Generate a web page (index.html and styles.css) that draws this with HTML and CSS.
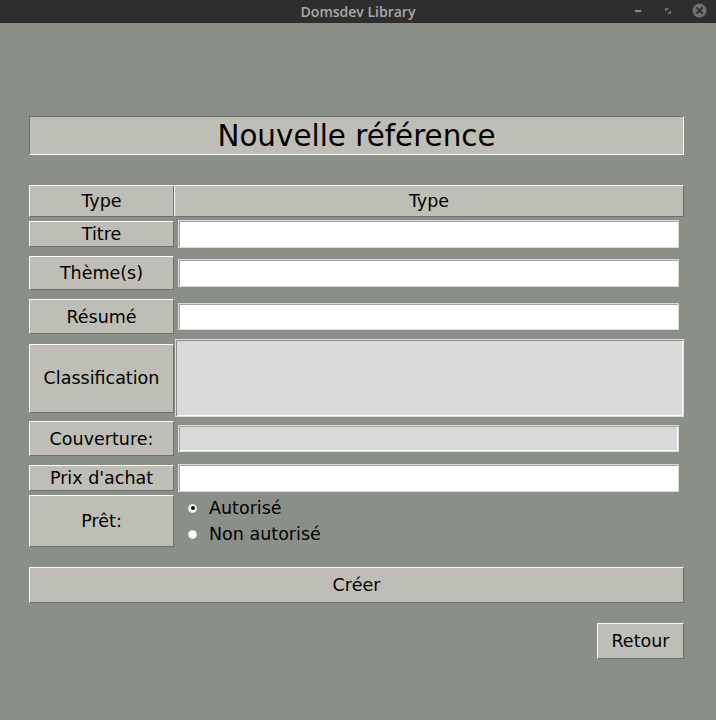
FILE: index.html
```html
<!DOCTYPE html>
<html lang="fr">
<head>
<meta charset="utf-8">
<title>Domsdev Library</title>
<link rel="stylesheet" href="styles.css">
</head>
<body>
<header class="titlebar">
  <span class="titlebar-text">Domsdev Library</span>
  <div class="wm-buttons">
    <svg class="wm-min" width="8" height="4" viewBox="0 0 8 4"><rect x="1" y="1" width="6" height="2" fill="#8c8c8c"/></svg>
    <svg class="wm-max" width="8" height="8" viewBox="0 0 8 8"><path d="M1 1h4L1 5z M7 7H3l4-4z" fill="#6f6f6f"/></svg>
    <svg class="wm-close" width="15" height="15" viewBox="0 0 15 15"><circle cx="7.5" cy="7.5" r="7" fill="#707070"/><path d="M5 5l5 5M10 5l-5 5" stroke="#2e2e2e" stroke-width="1.8" stroke-linecap="round"/></svg>
  </div>
</header>
<main class="window">
  <div class="heading">Nouvelle référence</div>
  <div class="form">
    <div class="row row-type">
      <div class="lbl h-32">Type</div>
      <div class="lbl lbl-wide h-32">Type</div>
    </div>
    <div class="row row-titre">
      <div class="lbl h-26">Titre</div>
      <div class="entry h-28"></div>
    </div>
    <div class="row row-theme">
      <div class="lbl h-34">Thème(s)</div>
      <div class="entry h-28"></div>
    </div>
    <div class="row row-resume">
      <div class="lbl h-35">Résumé</div>
      <div class="entry h-27"></div>
    </div>
    <div class="row row-classif">
      <div class="lbl h-69">Classification</div>
      <div class="textbox"></div>
    </div>
    <div class="row row-couv">
      <div class="lbl h-35">Couverture:</div>
      <div class="entry entry-disabled h-27"></div>
    </div>
    <div class="row row-prix">
      <div class="lbl h-26">Prix d'achat</div>
      <div class="entry h-28"></div>
    </div>
    <div class="row row-pret">
      <div class="lbl h-52">Prêt:</div>
      <div class="radios">
        <div class="radio"><span class="dot dot-on"></span><span>Autorisé</span></div>
        <div class="radio"><span class="dot"></span><span>Non autorisé</span></div>
      </div>
    </div>
  </div>
  <div class="btn btn-wide">Créer</div>
  <div class="actions"><div class="btn btn-back">Retour</div></div>
</main>
</body>
</html>
```
FILE: styles.css
```css
html, body {
  margin: 0;
  padding: 0;
}
body {
  width: 716px;
  height: 720px;
  background: #8a8f87;
  font-family: "DejaVu Sans", sans-serif;
  font-size: 17.5px;
  color: #000;
  overflow: hidden;
}
.titlebar {
  height: 23px;
  background: #2e2e2e;
  display: flex;
  align-items: center;
  justify-content: center;
  position: relative;
}
.titlebar-text {
  font-family: "Open Sans", sans-serif;
  font-weight: 600;
  font-size: 14px;
  color: #aaaaaa;
  margin-top: -1px;
}
.wm-buttons {
  position: absolute;
  right: 9px;
  top: 3px;
  display: flex;
  align-items: center;
}
.wm-min { margin-right: 22px; }
.wm-max { margin-right: 20px; }
.window {
  padding: 93px 0 0 29px;
  display: flex;
  flex-direction: column;
  width: 655px;
}
.heading {
  height: 39px;
  box-sizing: border-box;
  background: #bfbeb6;
  border: 1px solid;
  border-color: #6d6f6a #ffffff #ffffff #6d6f6a;
  font-size: 29.4px;
  display: flex;
  align-items: center;
  justify-content: center;
}
.form {
  margin-top: 30px;
  display: flex;
  flex-direction: column;
}
.row {
  display: flex;
  align-items: center;
}
.row-type { height: 32px; }
.row-titre { height: 28px; margin-top: 3px; }
.row-theme { height: 34px; margin-top: 8px; }
.row-resume { height: 35px; margin-top: 9px; }
.row-classif { height: 78px; margin-top: 5px; }
.row-couv { height: 35px; margin-top: 4px; }
.row-prix { height: 28px; margin-top: 8px; }
.row-pret { height: 52px; margin-top: 3px; }
.lbl {
  width: 145px;
  flex: none;
  box-sizing: border-box;
  background: #bfbeb6;
  border: 1px solid;
  border-color: #fbfbfa #6d6f6a #6d6f6a #fbfbfa;
  display: flex;
  align-items: center;
  justify-content: center;
  white-space: nowrap;
}
.lbl-wide { width: 510px; }
.h-26 { height: 26px; }
.h-27 { height: 27px; }
.h-28 { height: 28px; }
.h-32 { height: 32px; }
.h-34 { height: 34px; }
.h-35 { height: 35px; }
.h-52 { height: 52px; }
.h-69 { height: 69px; }
.entry {
  margin-left: 4px;
  width: 501px;
  box-sizing: border-box;
  background: #ffffff;
  border: 1px solid #d9d9d9;
  box-shadow: inset 1px 1px 0 #a3a3a3, inset -1px -1px 0 #ffffff;
}
.entry-disabled {
  background: #d9d9d9;
  border-color: #dcdcdc;
}
.textbox {
  margin-left: 1px;
  width: 509px;
  height: 78px;
  box-sizing: border-box;
  background: #d9d9d9;
  border: 1px solid #dcdcdc;
  box-shadow: inset 1px 1px 0 #8e8e8e, inset -1px -1px 0 #ffffff;
}
.radios {
  margin-left: 14px;
  display: flex;
  flex-direction: column;
}
.radio {
  height: 26px;
  display: flex;
  align-items: center;
}
.dot {
  width: 9px;
  height: 9px;
  border-radius: 50%;
  background: #ffffff;
  margin-right: 12px;
  position: relative;
  box-sizing: border-box;
  border: 1px solid #e8e8e8;
}
.dot-on::after {
  content: "";
  position: absolute;
  left: 1.5px;
  top: 1.5px;
  width: 4px;
  height: 4px;
  border-radius: 50%;
  background: #000;
}
.btn {
  box-sizing: border-box;
  height: 36px;
  background: #bfbeb6;
  border: 1px solid;
  border-color: #fbfbfa #6d6f6a #6d6f6a #fbfbfa;
  display: flex;
  align-items: center;
  justify-content: center;
}
.btn-wide {
  margin-top: 20px;
  width: 655px;
}
.actions {
  margin-top: 20px;
  display: flex;
  justify-content: flex-end;
}
.btn-back {
  width: 87px;
}
```
